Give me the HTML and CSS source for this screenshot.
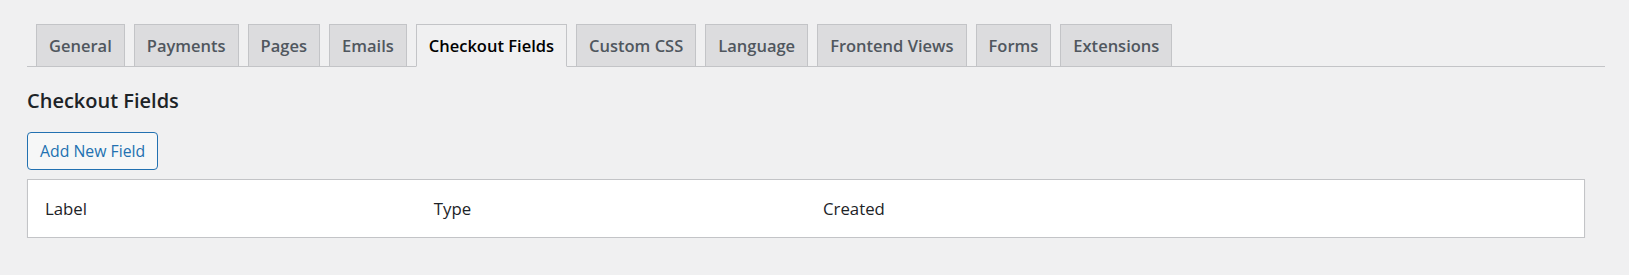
FILE: index.html
```html
<!DOCTYPE html>
<html lang="en">
<head>
<meta charset="utf-8">
<title>Checkout Fields</title>
<link rel="stylesheet" href="styles.css">
</head>
<body>
<div class="wrap">
  <nav class="nav-tabs">
    <a class="nav-tab" href="#">General</a>
    <a class="nav-tab" href="#">Payments</a>
    <a class="nav-tab" href="#">Pages</a>
    <a class="nav-tab" href="#">Emails</a>
    <a class="nav-tab active" href="#">Checkout Fields</a>
    <a class="nav-tab" href="#">Custom CSS</a>
    <a class="nav-tab" href="#">Language</a>
    <a class="nav-tab" href="#">Frontend Views</a>
    <a class="nav-tab" href="#">Forms</a>
    <a class="nav-tab" href="#">Extensions</a>
  </nav>
  <h2 class="page-title">Checkout Fields</h2>
  <button class="button" type="button">Add New Field</button>
  <table class="fields-table">
    <thead>
      <tr>
        <th>Label</th>
        <th>Type</th>
        <th>Created</th>
        <th></th>
      </tr>
    </thead>
  </table>
</div>
</body>
</html>
```

FILE: styles.css
```css
html, body {
  margin: 0;
  padding: 0;
  background: #f0f0f1;
}
body {
  font-family: "Open Sans", "Noto Sans", "Liberation Sans", sans-serif;
  color: #3c434a;
}
.wrap {
  padding: 24px 24px 0 27px;
}
.nav-tabs {
  display: flex;
  align-items: flex-end;
  border-bottom: 1px solid #c3c4c7;
  padding-left: 0;
}
.nav-tab {
  display: block;
  margin-left: 9px;
  margin-bottom: -1px;
  padding: 6px 12px;
  font-size: 16.5px;
  font-weight: 600;
  line-height: 29px;
  color: #50575e;
  background: #dcdcde;
  border: 1px solid #c3c4c7;
  text-decoration: none;
  white-space: nowrap;
}
.nav-tab.active {
  background: #f0f0f1;
  color: #000;
  border-bottom-color: #f0f0f1;
}
.page-title {
  margin: 20px 0 0;
  font-size: 20px;
  font-weight: 600;
  line-height: 28px;
  color: #1d2327;
}
.button {
  display: block;
  margin-top: 17px;
  height: 38px;
  padding: 0 12px;
  font-family: inherit;
  font-size: 15.8px;
  color: #2271b1;
  background: #f6f7f7;
  border: 1px solid #2271b1;
  border-radius: 4px;
  cursor: pointer;
}
.fields-table {
  margin-top: 9px;
  width: calc(100% - 20px);
  border-collapse: collapse;
  table-layout: fixed;
  background: #fff;
  border: 1px solid #c3c4c7;
  box-shadow: 0 1px 1px rgba(0, 0, 0, 0.08);
}
.fields-table th {
  padding: 17px 17px;
  font-size: 16.8px;
  font-weight: 400;
  line-height: 23px;
  text-align: left;
  color: #1d2327;
}
```
